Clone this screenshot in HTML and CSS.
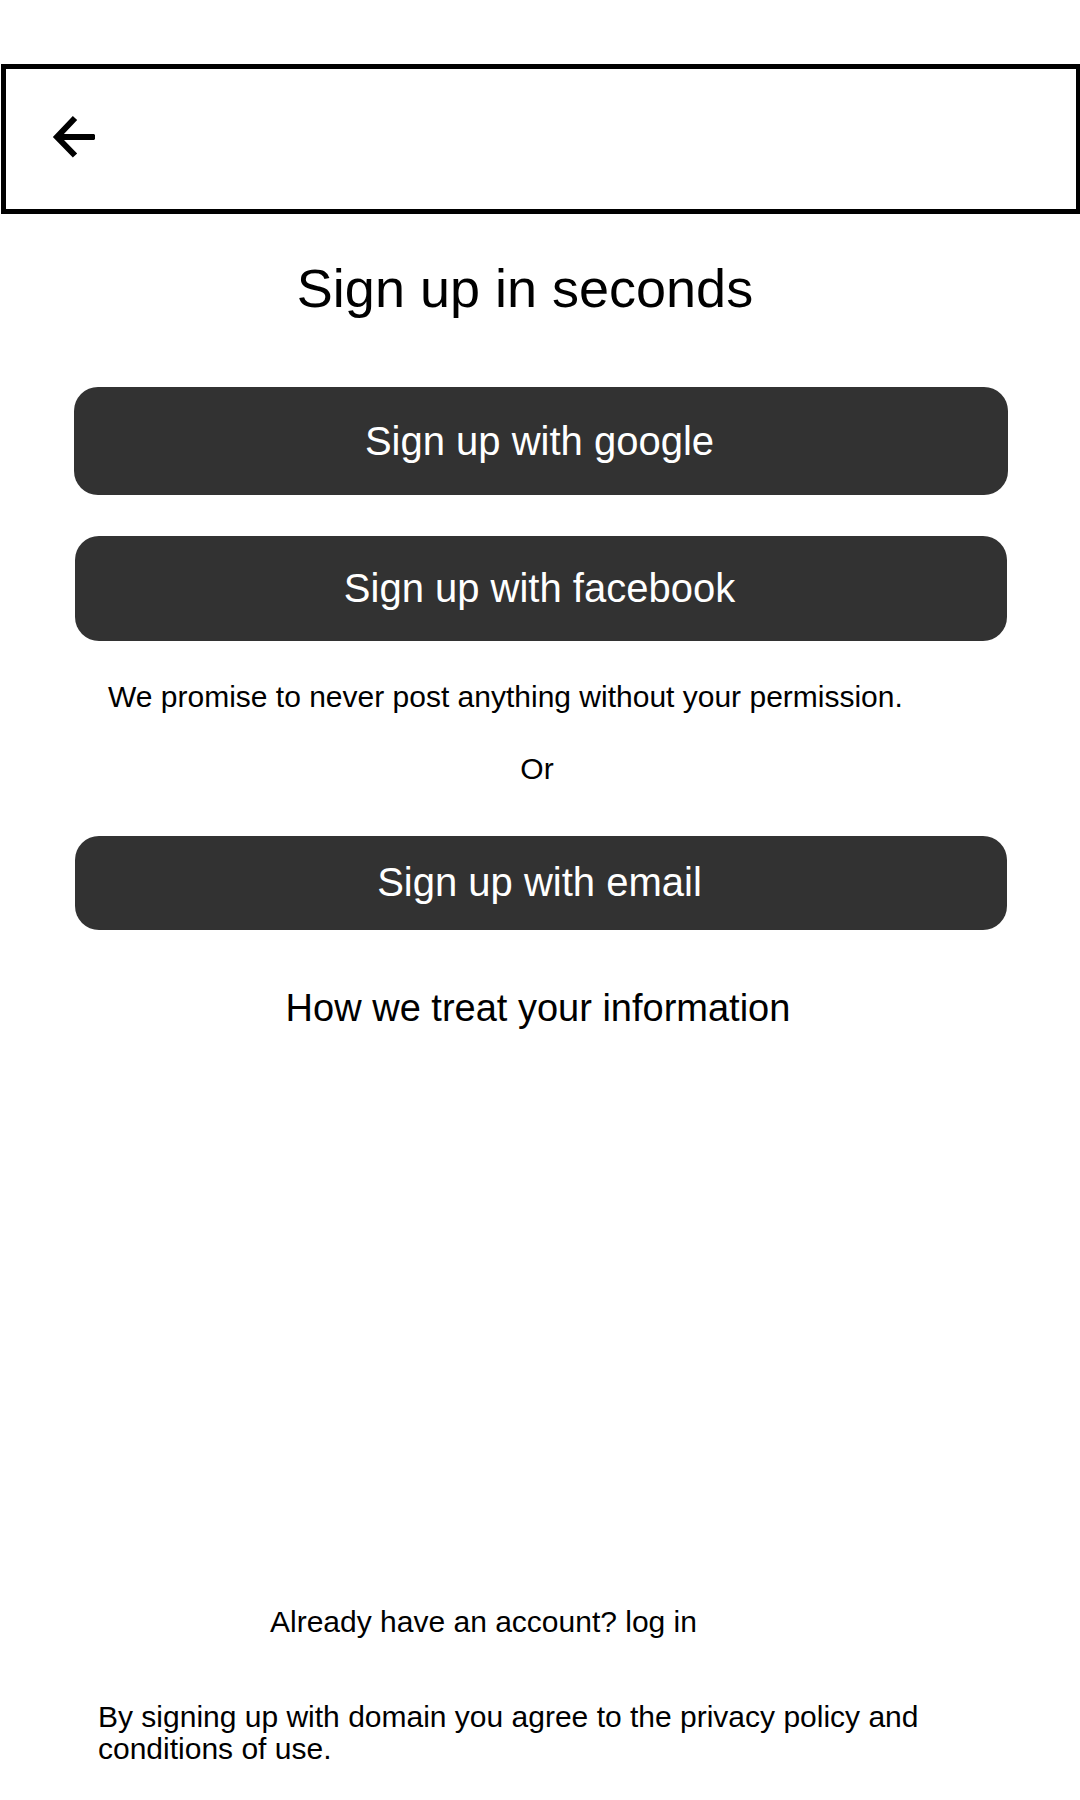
FILE: index.html
```html
<!DOCTYPE html>
<html lang="en">
<head>
<meta charset="utf-8">
<meta name="viewport" content="width=device-width, initial-scale=1">
<title>Sign up</title>
<link rel="stylesheet" href="styles.css">
</head>
<body>
<header class="topbar">
  <button class="back" type="button" aria-label="Back">
    <svg class="back-icon" viewBox="0 0 44 44" aria-hidden="true"><path d="M6 22H40"/><path d="M23 3L5 22l18 18.500"/><path class="cap" d="M40 19h2l1 1v4l-1 1h-2z"/></svg>
  </button>
</header>
<main class="content">
  <h1 class="title">Sign up in seconds</h1>
  <button class="signup google" type="button">Sign up with google</button>
  <button class="signup facebook" type="button">Sign up with facebook</button>
  <p class="promise">We promise to never post anything without your permission.</p>
  <p class="or">Or</p>
  <button class="signup email" type="button">Sign up with email</button>
  <a class="info" href="#">How we treat your information</a>
</main>
<footer class="footer">
  <p class="login">Already have an account? <a href="#">log in</a></p>
  <p class="legal">By signing up with domain you agree to the privacy policy and conditions of use.</p>
</footer>
</body>
</html>
```

FILE: styles.css
```css
* { box-sizing: border-box; }
body {
  display: flex;
  flex-direction: column;
  min-height: 100vh;
  margin: 0;
  padding-top: 64px;
  background: #fff;
  color: #000;
  font-family: "Liberation Sans", Arial, sans-serif;
  font-size: 30px;
  line-height: 32px;
}
h1, p { margin: 0; }
a { color: inherit; text-decoration: none; }
button { font: inherit; cursor: pointer; }
.topbar {
  margin-left: 1px;
  padding: 46px 46px 50px;
  border: 5px solid #000;
  border-right-width: 4px;
}
.back {
  display: block;
  padding: 0;
  border: 0;
  background: none;
}
.back-icon {
  display: block;
  width: 44px;
  height: 44px;
  fill: none;
  stroke: #000;
  stroke-width: 6;
}
.cap { fill: #000; stroke: none; }
.content {
  display: flex;
  flex-direction: column;
  padding: 44px 73px 0 75px;
  text-align: center;
}
.title {
  margin-right: 32px;
  font-size: 54px;
  font-weight: 400;
  line-height: 60px;
}
.signup {
  border: 0;
  border-radius: 24px;
  background: #323232;
  color: #fff;
  font-size: 40px;
  line-height: 44px;
}
.google { margin: 69px -1px 0; padding: 32px 3px 32px 0; }
.facebook { margin-top: 41px; padding: 30px 3px 31px 0; }
.promise { margin-top: 40px; padding-left: 33px; text-align: left; }
.or { margin-top: 40px; margin-right: 8px; }
.email { margin-top: 51px; padding: 24px 3px 26px 0; }
.info { margin-top: 56px; margin-right: 6px; font-size: 38px; line-height: 44px; }
.footer {
  margin-top: auto;
  padding: 0 98px 35px;
}
.login { padding-left: 172px; }
.legal { margin-top: 63px; }
```
